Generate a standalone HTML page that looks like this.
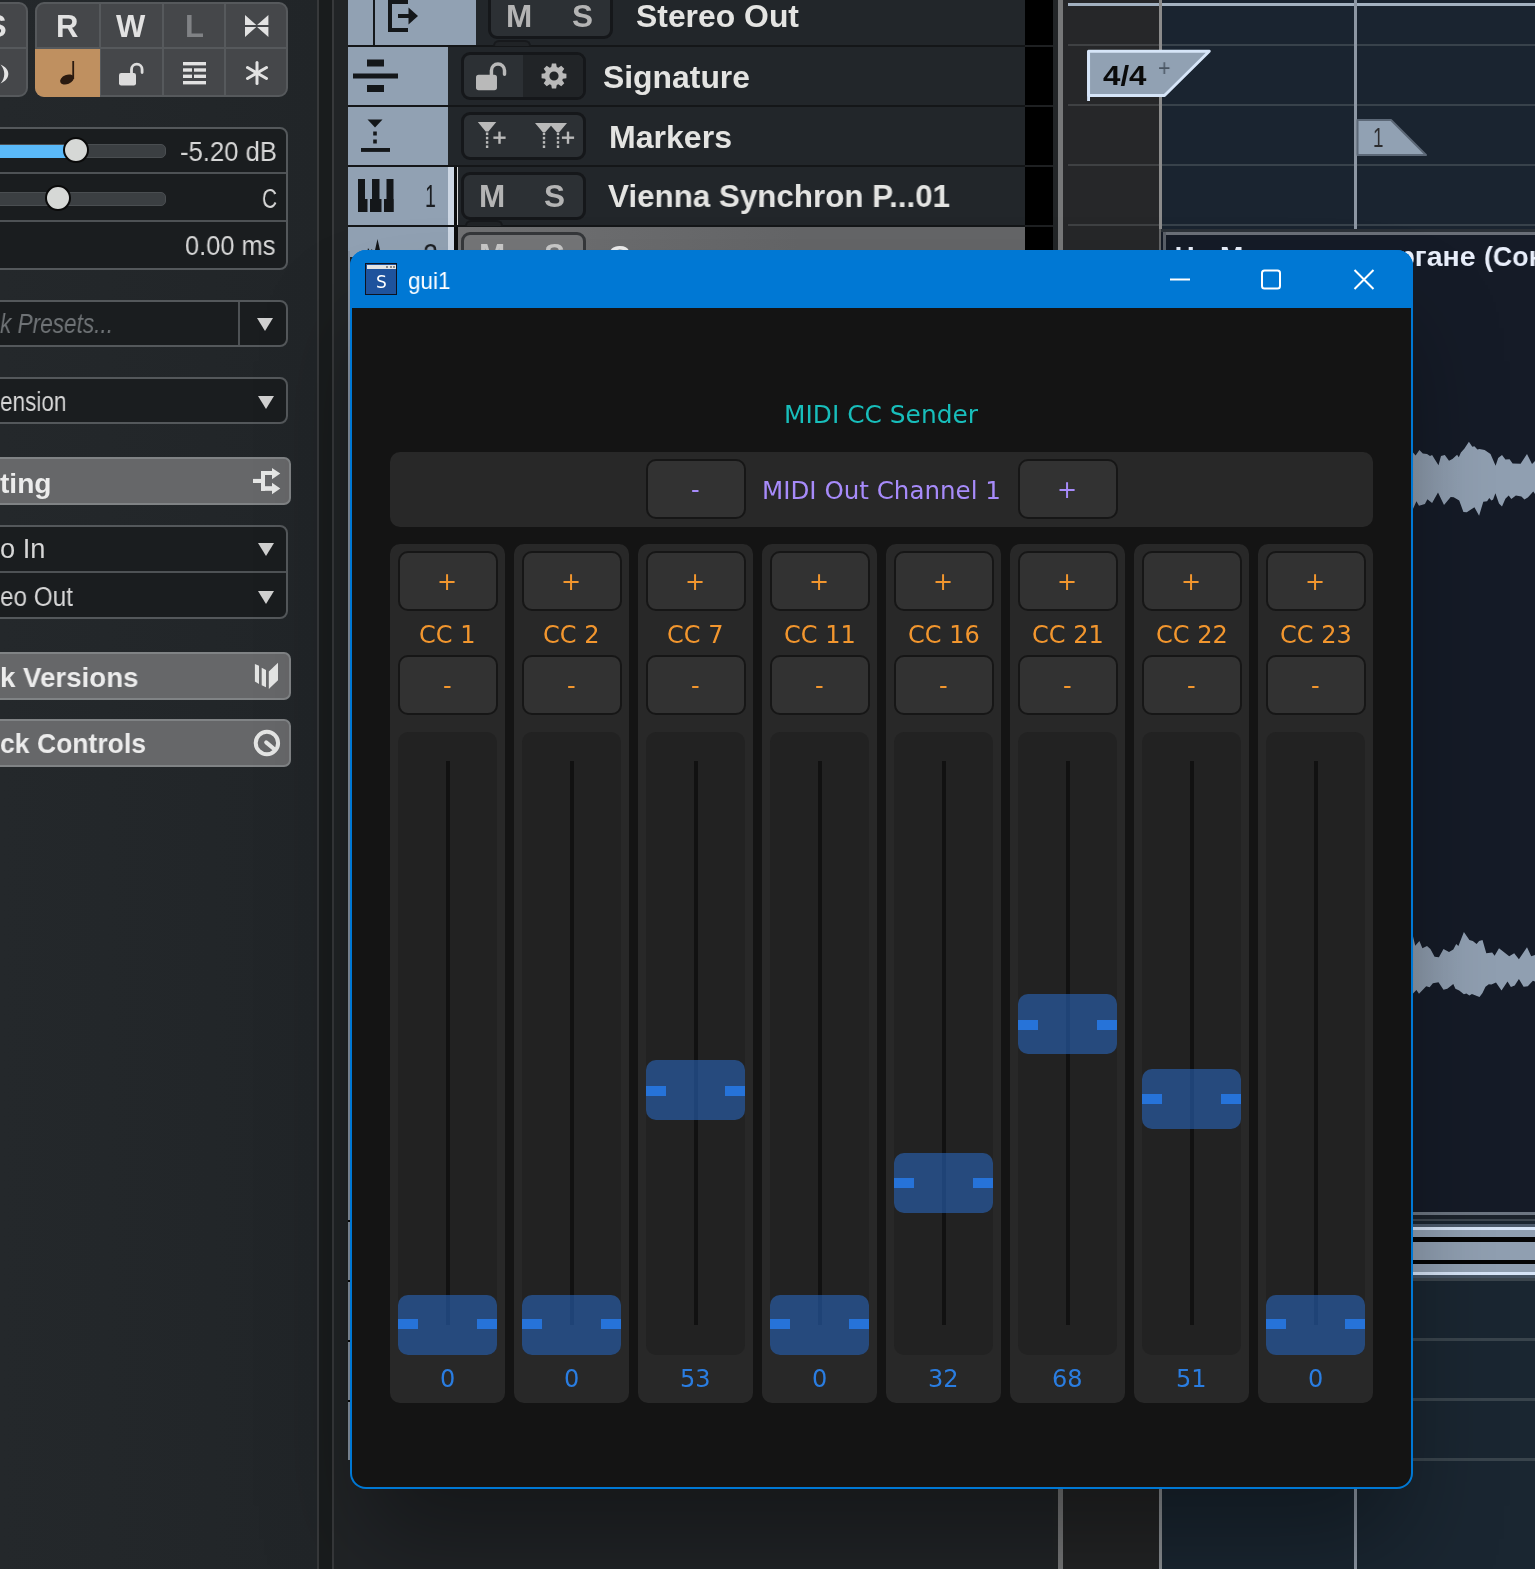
<!DOCTYPE html><html><head><meta charset="utf-8"><title>gui1</title><style>
html,body{margin:0;padding:0;background:#212427;}
body{width:1535px;height:1569px;position:relative;overflow:hidden;font-family:"Liberation Sans",sans-serif;}
div,span.t,svg{position:absolute;box-sizing:border-box;}
span.t{white-space:pre;transform-origin:0 50%;will-change:transform;}
.ib{background:#1a1d1f;border:2px solid #54585b;border-radius:8px;}
.hd{background:#666769;border:2.5px solid #808385;border-radius:7px;}
.grp{background:#2c3034;border:3px solid #15171a;border-radius:9px;}
.btn{background:#323232;border:2px solid #161616;border-radius:10px;}
.col{background:#282828;border-radius:10px;}
.sl{background:#222222;border-radius:10px;}
.hn{background:rgba(41,101,187,0.6);border-radius:10px;}
</style></head><body><div style="left:0px;top:0px;width:317px;height:1569px;background:linear-gradient(90deg,#24282b,#212528);"></div><div style="left:317px;top:0px;width:2.2px;height:1569px;background:#37393b;"></div><div style="left:319.2px;top:0px;width:12.5px;height:1569px;background:#191c1d;"></div><div style="left:331.7px;top:0px;width:2.3px;height:1569px;background:#37393b;"></div><div style="left:334px;top:0px;width:14px;height:1569px;background:#212426;"></div><div style="left:-12px;top:2px;width:40px;height:95px;background:#45474a;border:2px solid #56595c;border-radius:9px;"></div><div style="left:-12px;top:47px;width:38px;height:2px;background:#56595c;"></div><div style="left:35px;top:2px;width:253px;height:95px;background:#45474a;border:2px solid #56595c;border-radius:9px;overflow:hidden;"><div style="left:62px;top:-2px;width:2px;height:96px;background:#56595c;"></div><div style="left:125px;top:-2px;width:2px;height:96px;background:#56595c;"></div><div style="left:187px;top:-2px;width:2px;height:96px;background:#56595c;"></div><div style="left:-2px;top:43px;width:254px;height:2px;background:#56595c;"></div></div><div style="left:35px;top:49px;width:65px;height:48px;background:#bf9060;border-radius:0 0 0 9px;"></div><span class="t" style="left:-14.50px;top:11.26px;font:normal 700 31px/31px 'Liberation Sans', sans-serif;color:#e2e2e2;">S</span><span class="t" style="left:55.80px;top:10.76px;font:normal 700 31px/31px 'Liberation Sans', sans-serif;color:#e2e2e2;">R</span><span class="t" style="left:116.37px;top:10.76px;font:normal 700 31px/31px 'Liberation Sans', sans-serif;color:#e2e2e2;">W</span><span class="t" style="left:184.53px;top:10.76px;font:normal 700 31px/31px 'Liberation Sans', sans-serif;color:#808285;">L</span><svg style="left:245px;top:15px" width="24" height="23" viewBox="0 0 24 23"><path d="M0 0 L11.3 9.9 L0 9.9Z M0 22 L11.3 12.1 L0 12.1Z M23.4 0 L12.1 9.9 L23.4 9.9Z M23.4 22 L12.1 12.1 L23.4 12.1Z" fill="#e2e2e2"/></svg><svg style="left:58px;top:58px" width="22" height="30" viewBox="0 0 22 30"><ellipse cx="9" cy="21.5" rx="7.2" ry="4.6" transform="rotate(-22 9 21.5)" fill="#2a1a10"/><rect x="14.3" y="3" width="1.8" height="18" fill="#2a1a10"/></svg><svg style="left:119px;top:61px" width="26.0" height="26.0" viewBox="0 0 26 26"><rect x="0" y="12" width="17" height="12.5" rx="2.2" fill="#dcdcdc"/><path d="M12.5 13 V8.5 A5.3 5.3 0 0 1 23.1 8.5 V11.5" fill="none" stroke="#dcdcdc" stroke-width="2.8" stroke-linecap="round"/></svg><svg style="left:183px;top:62px" width="24" height="24" viewBox="0 0 24 24"><g fill="#e2e2e2"><rect x="0" y="0" width="23" height="3.4"/><rect x="0" y="6.3" width="9" height="3.4"/><rect x="11" y="6.3" width="12" height="3.4"/><rect x="0" y="12.6" width="9" height="3.4"/><rect x="11" y="12.6" width="12" height="3.4"/><rect x="0" y="19" width="23" height="3.4"/></g></svg><svg style="left:245px;top:61px" width="24" height="24" viewBox="0 0 24 24"><g stroke="#e2e2e2" stroke-width="3" stroke-linecap="round"><line x1="12" y1="1.5" x2="12" y2="22.5"/><line x1="2.5" y1="6.5" x2="21.5" y2="17.5"/><line x1="2.5" y1="17.5" x2="21.5" y2="6.5"/></g></svg><svg style="left:0px;top:64px" width="12" height="20" viewBox="0 0 12 20"><path d="M0.5 0.5 C11 5 11 15 0.5 19.5 C5.5 14 5.5 6 0.5 0.5Z" fill="#e4e4e4"/></svg><div class="ib" style="left:-12px;top:127px;width:300px;height:143px;"></div><div style="left:-10px;top:172px;width:296px;height:2px;background:#4e5255;"></div><div style="left:-10px;top:220px;width:296px;height:2px;background:#4e5255;"></div><div style="left:-12px;top:144px;width:178px;height:14px;background:#3b3f42;border-radius:5px;border:1.5px solid #4a4e51;"></div><div style="left:-12px;top:144.5px;width:90px;height:13px;background:#5ab9f9;"></div><div style="left:62.6px;top:137.4px;width:26px;height:26px;background:#d6d8d6;border-radius:50%;border:2px solid #0a0a0a;"></div><div style="left:-12px;top:191.5px;width:178px;height:14px;background:#3b3f42;border-radius:5px;border:1.5px solid #4a4e51;"></div><div style="left:44.8px;top:185.2px;width:26px;height:26px;background:#d6d8d6;border-radius:50%;border:2px solid #0a0a0a;"></div><span class="t" style="left:180.00px;top:139.14px;font:normal 400 27px/27px 'Liberation Sans', sans-serif;color:#d6d6d6;transform:scaleX(0.9503);">-5.20 dB</span><span class="t" style="left:262.00px;top:186.14px;font:normal 400 27px/27px 'Liberation Sans', sans-serif;color:#d6d6d6;transform:scaleX(0.7692);">C</span><span class="t" style="left:184.50px;top:233.14px;font:normal 400 27px/27px 'Liberation Sans', sans-serif;color:#d6d6d6;transform:scaleX(0.9422);">0.00 ms</span><div class="ib" style="left:-12px;top:300px;width:300px;height:47px;"></div><div style="left:238px;top:302px;width:2px;height:43px;background:#4e5255;"></div><span class="t" style="left:0.00px;top:310.64px;font:italic 400 27px/27px 'Liberation Sans', sans-serif;color:#6f7376;transform:scaleX(0.8367);">k Presets...</span><svg style="left:257.0px;top:318.0px" width="16" height="13" viewBox="0 0 16 13"><polygon points="0,0 16,0 8.0,13" fill="#d0d0d0"/></svg><div class="ib" style="left:-12px;top:377px;width:300px;height:47px;"></div><span class="t" style="left:0.00px;top:388.84px;font:normal 400 27px/27px 'Liberation Sans', sans-serif;color:#d6d6d6;transform:scaleX(0.8357);">ension</span><svg style="left:258.0px;top:395.5px" width="16" height="13" viewBox="0 0 16 13"><polygon points="0,0 16,0 8.0,13" fill="#d0d0d0"/></svg><div class="hd" style="left:-12px;top:457px;width:303px;height:48px;"></div><span class="t" style="left:0.00px;top:469.50px;font:normal 700 28px/28px 'Liberation Sans', sans-serif;color:#ececec;transform:scaleX(1.0037);">ting</span><svg style="left:253px;top:468px" width="29" height="27" viewBox="0 0 29 27"><g fill="#e6e7e6"><rect x="0" y="10.9" width="9" height="4.1"/><rect x="8" y="3" width="4" height="19.8"/><rect x="8" y="3" width="11.5" height="4"/><rect x="8" y="18.2" width="11.5" height="4.6"/><path d="M19 0 L27.3 5.6 L19 11.2Z M19 14.7 L27.3 20.5 L19 26.2Z"/></g></svg><div class="ib" style="left:-12px;top:525px;width:300px;height:94px;"></div><div style="left:-10px;top:571px;width:296px;height:2px;background:#4e5255;"></div><span class="t" style="left:0.00px;top:535.64px;font:normal 400 27px/27px 'Liberation Sans', sans-serif;color:#d6d6d6;transform:scaleX(1.0101);">o In</span><span class="t" style="left:0.00px;top:583.74px;font:normal 400 27px/27px 'Liberation Sans', sans-serif;color:#d6d6d6;transform:scaleX(0.9005);">eo Out</span><svg style="left:258.0px;top:543.0px" width="16" height="13" viewBox="0 0 16 13"><polygon points="0,0 16,0 8.0,13" fill="#d0d0d0"/></svg><svg style="left:258.0px;top:591.0px" width="16" height="13" viewBox="0 0 16 13"><polygon points="0,0 16,0 8.0,13" fill="#d0d0d0"/></svg><div class="hd" style="left:-12px;top:652px;width:303px;height:48px;"></div><span class="t" style="left:0.00px;top:663.80px;font:normal 700 28px/28px 'Liberation Sans', sans-serif;color:#ececec;transform:scaleX(0.9886);">k Versions</span><svg style="left:250px;top:660px" width="32" height="32" viewBox="0 0 32 32"><g fill="#e4e5e4"><path d="M4.9 4 L9 5.7 L9 24 L4.9 21.5Z"/><path d="M11.7 7.8 L16 9.9 L16 27.3 L11.7 25.2Z"/><path d="M18.8 11.5 L28 2.8 L28 20.2 L18.8 28.9Z"/></g></svg><div class="hd" style="left:-12px;top:719.2px;width:303px;height:48px;"></div><span class="t" style="left:0.00px;top:730.30px;font:normal 700 28px/28px 'Liberation Sans', sans-serif;color:#ececec;transform:scaleX(0.9479);">ck Controls</span><svg style="left:252px;top:728px" width="30" height="30" viewBox="0 0 30 30"><circle cx="14.9" cy="15" r="11.2" fill="none" stroke="#e4e5e4" stroke-width="4"/><path d="M14.2 14.4 L23 21.8" stroke="#e4e5e4" stroke-width="4" stroke-linecap="round"/></svg><div style="left:348px;top:0px;width:677px;height:251px;background:#22262a;"></div><div style="left:1025px;top:0px;width:28px;height:251px;background:#000;"></div><div style="left:1053px;top:0px;width:5px;height:1569px;background:#222527;"></div><div style="left:348px;top:45px;width:677px;height:2px;background:#141618;"></div><div style="left:1025px;top:45px;width:28px;height:2px;background:#1e2022;"></div><div style="left:348px;top:105px;width:677px;height:2px;background:#141618;"></div><div style="left:1025px;top:105px;width:28px;height:2px;background:#1e2022;"></div><div style="left:348px;top:165px;width:677px;height:2px;background:#141618;"></div><div style="left:1025px;top:165px;width:28px;height:2px;background:#1e2022;"></div><div style="left:348px;top:225px;width:677px;height:2px;background:#141618;"></div><div style="left:1025px;top:225px;width:28px;height:2px;background:#1e2022;"></div><div style="left:348px;top:0px;width:128px;height:45px;background:#91a1b3;"></div><div style="left:373px;top:0px;width:2px;height:45px;background:#15181b;"></div><svg style="left:386px;top:-7.3px" width="36" height="40" viewBox="0 0 36 40"><path d="M22 9 H4 V37 H22" fill="none" stroke="#14171a" stroke-width="4"/><path d="M12 23 H24" stroke="#14171a" stroke-width="4"/><path d="M22.5 14.5 L32 23 L22.5 31.5Z" fill="#14171a"/></svg><div class="grp" style="left:488px;top:-12px;width:125px;height:50.5px;"></div><span class="t" style="left:506.17px;top:0.84px;font:normal 700 31.5px/31.5px 'Liberation Sans', sans-serif;color:#b4b4b4;">M</span><span class="t" style="left:571.79px;top:0.84px;font:normal 700 31.5px/31.5px 'Liberation Sans', sans-serif;color:#b4b4b4;">S</span><span class="t" style="left:636.00px;top:1.34px;font:normal 700 31.5px/31.5px 'Liberation Sans', sans-serif;color:#e4e4e2;transform:scaleX(1.0122);">Stereo Out</span><div style="left:492.5px;top:40px;width:38px;height:5.5px;background:#202326;border:2px solid #17191c;border-radius:6px 6px 0 0;border-bottom:none;"></div><div style="left:348px;top:47px;width:100px;height:58px;background:#91a1b3;"></div><svg style="left:353px;top:58px" width="46" height="36" viewBox="0 0 46 36"><g fill="#14171a"><rect x="14" y="1.5" width="17" height="7"/><rect x="0" y="15.5" width="45" height="5"/><rect x="14" y="27" width="17" height="7"/></g></svg><div class="grp" style="left:460.5px;top:52px;width:125px;height:47.5px;overflow:hidden;"><div style="left:59px;top:-3px;width:63px;height:48px;background:#212427;"></div></div><svg style="left:476.2px;top:60px" width="32.1" height="32.1" viewBox="0 0 26 26"><rect x="0" y="12" width="17" height="12.5" rx="2.2" fill="#b9b9b9"/><path d="M12.5 13 V8.5 A5.3 5.3 0 0 1 23.1 8.5 V11.5" fill="none" stroke="#b9b9b9" stroke-width="2.8" stroke-linecap="round"/></svg><svg style="left:541px;top:62.5px" width="26" height="26" viewBox="0 0 26 26"><path fill-rule="evenodd" d="M10.87,0.58 L15.13,0.58 L15.75,4.12 L17.34,4.77 L20.27,2.71 L23.29,5.73 L21.23,8.66 L21.88,10.25 L25.42,10.87 L25.42,15.13 L21.88,15.75 L21.23,17.34 L23.29,20.27 L20.27,23.29 L17.34,21.23 L15.75,21.88 L15.13,25.42 L10.87,25.42 L10.25,21.88 L8.66,21.23 L5.73,23.29 L2.71,20.27 L4.77,17.34 L4.12,15.75 L0.58,15.13 L0.58,10.87 L4.12,10.25 L4.77,8.66 L2.71,5.73 L5.73,2.71 L8.66,4.77 L10.25,4.12Z M17.6,13 A4.6 4.6 0 1 0 8.4,13 A4.6 4.6 0 1 0 17.6,13Z" fill="#b9b9b9"/></svg><span class="t" style="left:603.00px;top:61.64px;font:normal 700 31.5px/31.5px 'Liberation Sans', sans-serif;color:#e4e4e2;transform:scaleX(1.0118);">Signature</span><div style="left:348px;top:107px;width:100px;height:58px;background:#91a1b3;"></div><svg style="left:360px;top:118px" width="30" height="36" viewBox="0 0 30 36"><g fill="#14171a"><path d="M7.5 1.5 H22.5 L15 9.5Z"/><rect x="13.2" y="13.5" width="3.6" height="4"/><rect x="13.2" y="21.5" width="3.6" height="4"/><rect x="1" y="30" width="29" height="3.9"/></g></svg><div class="grp" style="left:460.5px;top:112px;width:125px;height:47.5px;"></div><svg style="left:476px;top:121px" width="104" height="30" viewBox="0 0 104 30"><g fill="#b9b9b9"><path d="M1.8 1 H20.3 L12.4 10.5 H9.7Z"/><rect x="9.9" y="11.5" width="2.4" height="2.6"/><rect x="9.9" y="15.8" width="2.4" height="2.6"/><rect x="9.9" y="20.1" width="2.4" height="2.6"/><rect x="9.9" y="24.4" width="2.4" height="2.6"/><rect x="17.4" y="15.5" width="12.2" height="2.4"/><rect x="22.3" y="10.6" width="2.4" height="12.2"/><path d="M59 2 H91 L83.4 11 H80.6 L75 4.8 L69.4 11 H66.6Z"/><rect x="66.8" y="11.5" width="2.4" height="2.6"/><rect x="66.8" y="15.8" width="2.4" height="2.6"/><rect x="66.8" y="20.1" width="2.4" height="2.6"/><rect x="66.8" y="24.4" width="2.4" height="2.6"/><rect x="80.8" y="11.5" width="2.4" height="2.6"/><rect x="80.8" y="15.8" width="2.4" height="2.6"/><rect x="80.8" y="20.1" width="2.4" height="2.6"/><rect x="80.8" y="24.4" width="2.4" height="2.6"/><rect x="85.9" y="15.5" width="12.2" height="2.4"/><rect x="90.8" y="10.6" width="2.4" height="12.2"/></g></svg><span class="t" style="left:609.00px;top:121.64px;font:normal 700 31.5px/31.5px 'Liberation Sans', sans-serif;color:#e4e4e2;transform:scaleX(1.0178);">Markers</span><div style="left:348px;top:167px;width:100px;height:58px;background:#91a1b3;"></div><div style="left:448px;top:167px;width:6px;height:58px;background:#cdd7e4;"></div><div style="left:454px;top:167px;width:3px;height:58px;background:#0c0d0e;"></div><div style="left:457px;top:167px;width:1px;height:58px;background:#d8d8d8;"></div><svg style="left:358px;top:179px" width="36" height="33" viewBox="0 0 36 33"><g fill="#14171a"><rect x="0" y="0" width="7" height="33"/><rect x="0" y="20" width="9.5" height="13"/><rect x="14" y="0" width="7.5" height="33"/><rect x="12" y="20" width="11.5" height="13"/><rect x="28.5" y="0" width="7" height="33"/><rect x="26" y="20" width="9.5" height="13"/></g></svg><span class="t" style="left:425.00px;top:181.06px;font:normal 400 31px/31px 'Liberation Sans', sans-serif;color:#1b1e22;transform:scaleX(0.6377);">1</span><div class="grp" style="left:460.5px;top:172px;width:125px;height:47.5px;"></div><span class="t" style="left:478.57px;top:180.84px;font:normal 700 31.5px/31.5px 'Liberation Sans', sans-serif;color:#b4b4b4;">M</span><span class="t" style="left:544.29px;top:180.84px;font:normal 700 31.5px/31.5px 'Liberation Sans', sans-serif;color:#b4b4b4;">S</span><span class="t" style="left:608.00px;top:180.64px;font:normal 700 31.5px/31.5px 'Liberation Sans', sans-serif;color:#e4e4e2;transform:scaleX(0.9950);">Vienna Synchron P...01</span><div style="left:465px;top:220px;width:38px;height:5.5px;background:#202326;border:2px solid #17191c;border-radius:6px 6px 0 0;border-bottom:none;"></div><div style="left:348px;top:227px;width:100px;height:30px;background:#91a1b3;"></div><div style="left:448px;top:227px;width:6px;height:30px;background:#cdd7e4;"></div><div style="left:454px;top:227px;width:4px;height:30px;background:#0c0d0e;"></div><div style="left:458px;top:227px;width:567px;height:30px;background:linear-gradient(90deg,#707173,#646567 60%);"></div><div style="left:460.5px;top:232px;width:125px;height:47.5px;background:#747577;border:3px solid #35373a;border-radius:9px;"></div><span class="t" style="left:478.57px;top:240.34px;font:normal 700 31.5px/31.5px 'Liberation Sans', sans-serif;color:#c8c8c8;">M</span><span class="t" style="left:544.29px;top:240.34px;font:normal 700 31.5px/31.5px 'Liberation Sans', sans-serif;color:#c8c8c8;">S</span><span class="t" style="left:608.00px;top:241.10px;font:normal 700 30px/30px 'Liberation Sans', sans-serif;color:#ececec;">G</span><span class="t" style="left:423.00px;top:239.76px;font:normal 400 31px/31px 'Liberation Sans', sans-serif;color:#1b1e22;transform:scaleX(0.8696);">2</span><svg style="left:366px;top:239px" width="24" height="20" viewBox="0 0 24 20"><path d="M0 20 L2 9 L4 12 L6 10 L8 20Z M7 20 L11.5 0 L16 20Z" fill="#14171a"/></svg><div style="left:348px;top:251px;width:2px;height:1209px;background:#8793a2;"></div><div style="left:348px;top:1220px;width:2px;height:2px;background:#0a0a0a;"></div><div style="left:348px;top:1280px;width:2px;height:2px;background:#0a0a0a;"></div><div style="left:348px;top:1340px;width:2px;height:2px;background:#0a0a0a;"></div><div style="left:348px;top:1400px;width:2px;height:2px;background:#0a0a0a;"></div><div style="left:1058px;top:0px;width:5px;height:1569px;background:#767778;"></div><div style="left:1063px;top:0px;width:97px;height:1569px;background:#262729;"></div><div style="left:1162px;top:0px;width:373px;height:1569px;background:#1a2430;"></div><div style="left:1063px;top:1281px;width:97px;height:288px;background:#232425;"></div><div style="left:1068px;top:3px;width:467px;height:2.5px;background:#a3b1c0;"></div><div style="left:1068px;top:43.5px;width:92px;height:2px;background:#3f4143;"></div><div style="left:1162px;top:43.5px;width:373px;height:2px;background:#38424b;"></div><div style="left:1068px;top:103.5px;width:92px;height:2px;background:#3f4143;"></div><div style="left:1162px;top:103.5px;width:373px;height:2px;background:#38424b;"></div><div style="left:1068px;top:163.5px;width:92px;height:2px;background:#3f4143;"></div><div style="left:1162px;top:163.5px;width:373px;height:2px;background:#38424b;"></div><div style="left:1068px;top:223.5px;width:92px;height:2px;background:#3f4143;"></div><div style="left:1162px;top:223.5px;width:373px;height:2px;background:#38424b;"></div><div style="left:1159px;top:0px;width:3px;height:232px;background:#8b8b8b;"></div><div style="left:1354px;top:0px;width:3px;height:230px;background:#8c96a3;"></div><svg style="left:1085px;top:48px" width="130" height="56" viewBox="0 0 130 56"><path d="M3.6 3.2 H124.3 L79.5 47.5 H3.6Z" fill="#91a1b3" stroke="#d6e5f8" stroke-width="2.9" stroke-linejoin="round"/><rect x="2.1" y="3" width="2.9" height="50" fill="#d6e5f8"/></svg><span class="t" style="left:1103.00px;top:61.80px;font:normal 700 28px/28px 'Liberation Sans', sans-serif;color:#0a0a0a;transform:scaleX(1.1172);">4/4</span><span class="t" style="left:1157.50px;top:56.83px;font:normal 400 23px/23px 'Liberation Sans', sans-serif;color:#4a5663;transform:scaleX(0.9302);">+</span><svg style="left:1355px;top:117.4px" width="76" height="42" viewBox="0 0 76 42"><path d="M2.5 3 H36 L71 38 H2.5Z" fill="#91a1b3" stroke="#5c6877" stroke-width="2" stroke-linejoin="round"/></svg><span class="t" style="left:1373.35px;top:124.30px;font:normal 400 28px/28px 'Liberation Sans', sans-serif;color:#2c2c2e;transform:scaleX(0.6740);">1</span><div style="left:1160px;top:229px;width:375px;height:983px;background:#151b27;"></div><div style="left:1160px;top:229px;width:375px;height:3px;background:#2b3138;"></div><div style="left:1163px;top:232px;width:372px;height:2.5px;background:#6a6f78;"></div><div style="left:1159px;top:229px;width:1.5px;height:24px;background:#636466;"></div><div style="left:1163px;top:232px;width:2.5px;height:30px;background:#5a5f68;"></div><span class="t" style="left:1175.00px;top:242.70px;font:normal 700 28px/28px 'Liberation Sans', sans-serif;color:#e8eefa;">Ч.</span><span class="t" style="left:1219.50px;top:242.70px;font:normal 700 28px/28px 'Liberation Sans', sans-serif;color:#e8eefa;">Марчелло на</span><span class="t" style="left:1379.50px;top:242.70px;font:normal 700 28px/28px 'Liberation Sans', sans-serif;color:#e8eefa;transform:scaleX(1.0177);">органе</span><span class="t" style="left:1483.60px;top:242.70px;font:normal 700 28px/28px 'Liberation Sans', sans-serif;color:#e8eefa;transform:scaleX(0.9565);">(Сон</span><svg style="left:0;top:0" width="1535" height="1569" viewBox="0 0 1535 1569"><defs><linearGradient id="wg" x1="1413" x2="1460" y1="0" y2="0" gradientUnits="userSpaceOnUse"><stop offset="0" stop-color="#8c9aab"/><stop offset="1" stop-color="#909fb1"/></linearGradient></defs><polygon points="1395.0,452.6 1413.0,452.6 1415.6,455.6 1419.4,450.1 1422.8,453.5 1427.0,453.9 1430.0,456.0 1432.1,455.1 1438.5,465.3 1441.0,456.0 1444.8,455.1 1449.0,460.7 1452.4,459.0 1457.1,454.7 1458.8,457.3 1460.9,452.6 1464.3,448.8 1468.9,441.8 1472.3,446.7 1474.4,446.3 1477.4,449.6 1479.5,449.0 1484.6,450.1 1490.5,453.9 1495.6,465.7 1498.2,458.1 1502.0,454.9 1505.4,459.4 1509.6,459.2 1512.6,463.6 1520.6,463.8 1527.0,454.0 1532.0,464.0 1535.4,460.7 1535.4,494.5 1533.3,491.6 1527.8,497.5 1524.4,499.6 1521.4,496.6 1515.9,495.4 1511.3,498.9 1508.7,495.4 1505.4,498.8 1502.0,506.4 1499.0,503.4 1495.4,493.3 1493.1,499.6 1491.4,500.5 1489.3,497.9 1487.1,501.3 1483.3,501.7 1479.1,515.7 1474.4,507.2 1466.8,512.3 1463.4,511.9 1459.2,500.5 1453.7,497.2 1450.7,497.1 1444.0,504.9 1438.0,492.4 1432.1,503.0 1427.4,499.2 1424.9,504.0 1419.0,505.7 1416.4,501.3 1413.0,508.9 1395.0,508.9" fill="url(#wg)"/><polygon points="1395.0,936.3 1413.0,936.3 1415.2,945.7 1419.4,941.0 1422.4,948.2 1427.0,946.1 1430.4,949.0 1434.6,956.7 1438.9,957.3 1443.5,949.0 1449.0,952.0 1453.3,949.5 1456.2,944.0 1458.4,946.1 1463.9,931.9 1469.4,940.1 1472.8,941.0 1476.6,944.0 1479.1,941.0 1482.5,939.9 1486.3,953.3 1492.2,952.4 1494.6,955.8 1499.0,948.2 1509.2,956.2 1514.2,953.3 1518.9,959.2 1527.0,947.3 1531.2,956.2 1535.4,955.0 1535.4,981.6 1532.9,980.8 1527.8,986.3 1523.6,986.7 1518.9,979.1 1514.7,985.5 1510.9,987.0 1507.5,981.6 1501.5,990.5 1496.0,982.5 1491.4,984.6 1488.8,984.2 1485.5,986.7 1482.5,993.1 1479.5,997.1 1471.9,994.1 1469.4,995.6 1466.4,993.5 1463.9,994.3 1459.2,990.5 1455.4,988.8 1453.3,983.9 1447.3,988.8 1443.5,989.7 1438.5,982.2 1432.9,983.3 1429.6,987.3 1426.2,986.3 1419.0,993.8 1416.4,990.1 1413.0,993.5 1395.0,993.5" fill="url(#wg)"/></svg><div style="left:1160px;top:1212px;width:375px;height:2.5px;background:#6d7682;"></div><div style="left:1160px;top:1214.5px;width:375px;height:4px;background:#1c232c;"></div><div style="left:1160px;top:1218.5px;width:375px;height:2.5px;background:#3e4750;"></div><div style="left:1160px;top:1221px;width:375px;height:3px;background:#1a2530;"></div><div style="left:1160px;top:1224px;width:375px;height:3px;background:#4d5b6c;"></div><div style="left:1160px;top:1227px;width:375px;height:3px;background:#d7e5f8;"></div><div style="left:1160px;top:1230px;width:375px;height:42px;background:#909fb1;"></div><div style="left:1160px;top:1272px;width:375px;height:3px;background:#d7e5f8;"></div><div style="left:1160px;top:1275px;width:375px;height:2.5px;background:#465464;"></div><div style="left:1160px;top:1277.5px;width:375px;height:3px;background:#3b454d;"></div><div style="left:1160px;top:1237px;width:395px;height:4.5px;background:#050505;border-radius:2px;"></div><div style="left:1160px;top:1259.5px;width:395px;height:4.5px;background:#050505;border-radius:2px;"></div><div style="left:1160px;top:1281px;width:375px;height:288px;background:#1a2631;"></div><div style="left:1160px;top:1338.3px;width:375px;height:2.5px;background:#39444c;"></div><div style="left:1160px;top:1398.3px;width:375px;height:2.5px;background:#39444c;"></div><div style="left:1160px;top:1458.3px;width:375px;height:2.5px;background:#39444c;"></div><div style="left:1159px;top:1281px;width:2.5px;height:288px;background:#8b8f93;"></div><div style="left:1354px;top:1281px;width:3px;height:288px;background:#8c96a3;"></div><div style="left:350px;top:250px;width:1063px;height:1239px;border-radius:16px;overflow:hidden;background:#0078d4;box-shadow:0 64px 100px -14px rgba(0,0,0,0.36);"><div style="left:0px;top:0px;width:1063px;height:58px;background:#0078d4;"></div><div style="left:15px;top:13px;width:32px;height:32px;background:#1e539d;border:1.5px solid #0d1320;"></div><div style="left:16.5px;top:14.5px;width:29px;height:4.5px;background:#e4e4e4;"></div><div style="left:36px;top:16px;width:2px;height:2px;background:#8a8a8a;"></div><div style="left:39.5px;top:16px;width:2px;height:2px;background:#8a8a8a;"></div><div style="left:43px;top:16px;width:2px;height:2px;background:#8a8a8a;"></div><span class="t" style="left:25.60px;top:23.62px;font:normal 400 17px/17px 'DejaVu Sans', 'Liberation Sans', sans-serif;color:#ffffff;">S</span><span class="t" style="left:57.50px;top:19.18px;font:normal 400 24px/24px 'Liberation Sans', sans-serif;color:#ffffff;transform:scaleX(0.9366);">gui1</span><svg style="left:810px;top:8.7px" width="230" height="42" viewBox="0 0 230 42"><g fill="none" stroke="#fff" stroke-width="2"><path d="M10 20.5 H30"/><rect x="102" y="11.5" width="18" height="18" rx="2.5"/><path d="M194.5 11 L213.5 30 M213.5 11 L194.5 30"/></g></svg><div style="left:2px;top:58px;width:1059px;height:1179px;background:#141414;border-radius:0 0 14px 14px;"></div><span class="t" style="left:434.00px;top:152.70px;font:normal 400 24px/24px 'DejaVu Sans', 'Liberation Sans', sans-serif;color:#18bebb;transform:scaleX(1.0363);">MIDI CC Sender</span><div style="left:40px;top:202px;width:983px;height:75px;background:#282828;border-radius:10px;"></div><div class="btn" style="left:295.5px;top:209px;width:100px;height:60px;"></div><div class="btn" style="left:667.5px;top:209px;width:100px;height:60px;"></div><span class="t" style="left:341.16px;top:227.70px;font:normal 400 24px/24px 'DejaVu Sans', 'Liberation Sans', sans-serif;color:#a78bfa;">-</span><span class="t" style="left:707.45px;top:227.70px;font:normal 400 24px/24px 'DejaVu Sans', 'Liberation Sans', sans-serif;color:#a78bfa;">+</span><span class="t" style="left:412.00px;top:228.70px;font:normal 400 24px/24px 'DejaVu Sans', 'Liberation Sans', sans-serif;color:#a78bfa;transform:scaleX(1.0233);">MIDI Out Channel 1</span><div class="col" style="left:40px;top:294px;width:115px;height:859px;"></div><div class="btn" style="left:47.5px;top:301px;width:100px;height:60px;"></div><span class="t" style="left:87.45px;top:320.20px;font:normal 400 24px/24px 'DejaVu Sans', 'Liberation Sans', sans-serif;color:#f2962e;">+</span><span class="t" style="left:69.29px;top:373.00px;font:normal 400 24px/24px 'DejaVu Sans', 'Liberation Sans', sans-serif;color:#f2962e;">CC 1</span><div class="btn" style="left:47.5px;top:405px;width:100px;height:60px;"></div><span class="t" style="left:93.16px;top:423.70px;font:normal 400 24px/24px 'DejaVu Sans', 'Liberation Sans', sans-serif;color:#f2962e;">-</span><div class="sl" style="left:48px;top:482px;width:99px;height:623px;"></div><div style="left:95.5px;top:511px;width:4px;height:564px;background:#111111;"></div><div class="hn" style="left:48px;top:1045px;width:99px;height:60px;"></div><div style="left:48px;top:1069.0px;width:20px;height:10px;background:#2673d9;"></div><div style="left:127px;top:1069.0px;width:20px;height:10px;background:#2673d9;"></div><span class="t" style="left:89.86px;top:1117.20px;font:normal 400 24px/24px 'DejaVu Sans', 'Liberation Sans', sans-serif;color:#2a7de1;">0</span><div class="col" style="left:164px;top:294px;width:115px;height:859px;"></div><div class="btn" style="left:171.5px;top:301px;width:100px;height:60px;"></div><span class="t" style="left:211.45px;top:320.20px;font:normal 400 24px/24px 'DejaVu Sans', 'Liberation Sans', sans-serif;color:#f2962e;">+</span><span class="t" style="left:193.29px;top:373.00px;font:normal 400 24px/24px 'DejaVu Sans', 'Liberation Sans', sans-serif;color:#f2962e;">CC 2</span><div class="btn" style="left:171.5px;top:405px;width:100px;height:60px;"></div><span class="t" style="left:217.16px;top:423.70px;font:normal 400 24px/24px 'DejaVu Sans', 'Liberation Sans', sans-serif;color:#f2962e;">-</span><div class="sl" style="left:172px;top:482px;width:99px;height:623px;"></div><div style="left:219.5px;top:511px;width:4px;height:564px;background:#111111;"></div><div class="hn" style="left:172px;top:1045px;width:99px;height:60px;"></div><div style="left:172px;top:1069.0px;width:20px;height:10px;background:#2673d9;"></div><div style="left:251px;top:1069.0px;width:20px;height:10px;background:#2673d9;"></div><span class="t" style="left:213.86px;top:1117.20px;font:normal 400 24px/24px 'DejaVu Sans', 'Liberation Sans', sans-serif;color:#2a7de1;">0</span><div class="col" style="left:288px;top:294px;width:115px;height:859px;"></div><div class="btn" style="left:295.5px;top:301px;width:100px;height:60px;"></div><span class="t" style="left:335.45px;top:320.20px;font:normal 400 24px/24px 'DejaVu Sans', 'Liberation Sans', sans-serif;color:#f2962e;">+</span><span class="t" style="left:317.29px;top:373.00px;font:normal 400 24px/24px 'DejaVu Sans', 'Liberation Sans', sans-serif;color:#f2962e;">CC 7</span><div class="btn" style="left:295.5px;top:405px;width:100px;height:60px;"></div><span class="t" style="left:341.16px;top:423.70px;font:normal 400 24px/24px 'DejaVu Sans', 'Liberation Sans', sans-serif;color:#f2962e;">-</span><div class="sl" style="left:296px;top:482px;width:99px;height:623px;"></div><div style="left:343.5px;top:511px;width:4px;height:564px;background:#111111;"></div><div class="hn" style="left:296px;top:810px;width:99px;height:60px;"></div><div style="left:296px;top:835.544094488189px;width:20px;height:10px;background:#2673d9;"></div><div style="left:375px;top:835.544094488189px;width:20px;height:10px;background:#2673d9;"></div><span class="t" style="left:330.23px;top:1117.20px;font:normal 400 24px/24px 'DejaVu Sans', 'Liberation Sans', sans-serif;color:#2a7de1;">53</span><div class="col" style="left:412px;top:294px;width:115px;height:859px;"></div><div class="btn" style="left:419.5px;top:301px;width:100px;height:60px;"></div><span class="t" style="left:459.45px;top:320.20px;font:normal 400 24px/24px 'DejaVu Sans', 'Liberation Sans', sans-serif;color:#f2962e;">+</span><span class="t" style="left:433.66px;top:373.00px;font:normal 400 24px/24px 'DejaVu Sans', 'Liberation Sans', sans-serif;color:#f2962e;">CC 11</span><div class="btn" style="left:419.5px;top:405px;width:100px;height:60px;"></div><span class="t" style="left:465.16px;top:423.70px;font:normal 400 24px/24px 'DejaVu Sans', 'Liberation Sans', sans-serif;color:#f2962e;">-</span><div class="sl" style="left:420px;top:482px;width:99px;height:623px;"></div><div style="left:467.5px;top:511px;width:4px;height:564px;background:#111111;"></div><div class="hn" style="left:420px;top:1045px;width:99px;height:60px;"></div><div style="left:420px;top:1069.0px;width:20px;height:10px;background:#2673d9;"></div><div style="left:499px;top:1069.0px;width:20px;height:10px;background:#2673d9;"></div><span class="t" style="left:461.86px;top:1117.20px;font:normal 400 24px/24px 'DejaVu Sans', 'Liberation Sans', sans-serif;color:#2a7de1;">0</span><div class="col" style="left:536px;top:294px;width:115px;height:859px;"></div><div class="btn" style="left:543.5px;top:301px;width:100px;height:60px;"></div><span class="t" style="left:583.45px;top:320.20px;font:normal 400 24px/24px 'DejaVu Sans', 'Liberation Sans', sans-serif;color:#f2962e;">+</span><span class="t" style="left:557.66px;top:373.00px;font:normal 400 24px/24px 'DejaVu Sans', 'Liberation Sans', sans-serif;color:#f2962e;">CC 16</span><div class="btn" style="left:543.5px;top:405px;width:100px;height:60px;"></div><span class="t" style="left:589.16px;top:423.70px;font:normal 400 24px/24px 'DejaVu Sans', 'Liberation Sans', sans-serif;color:#f2962e;">-</span><div class="sl" style="left:544px;top:482px;width:99px;height:623px;"></div><div style="left:591.5px;top:511px;width:4px;height:564px;background:#111111;"></div><div class="hn" style="left:544px;top:903px;width:99px;height:60px;"></div><div style="left:544px;top:927.9322834645669px;width:20px;height:10px;background:#2673d9;"></div><div style="left:623px;top:927.9322834645669px;width:20px;height:10px;background:#2673d9;"></div><span class="t" style="left:578.23px;top:1117.20px;font:normal 400 24px/24px 'DejaVu Sans', 'Liberation Sans', sans-serif;color:#2a7de1;">32</span><div class="col" style="left:660px;top:294px;width:115px;height:859px;"></div><div class="btn" style="left:667.5px;top:301px;width:100px;height:60px;"></div><span class="t" style="left:707.45px;top:320.20px;font:normal 400 24px/24px 'DejaVu Sans', 'Liberation Sans', sans-serif;color:#f2962e;">+</span><span class="t" style="left:681.66px;top:373.00px;font:normal 400 24px/24px 'DejaVu Sans', 'Liberation Sans', sans-serif;color:#f2962e;">CC 21</span><div class="btn" style="left:667.5px;top:405px;width:100px;height:60px;"></div><span class="t" style="left:713.16px;top:423.70px;font:normal 400 24px/24px 'DejaVu Sans', 'Liberation Sans', sans-serif;color:#f2962e;">-</span><div class="sl" style="left:668px;top:482px;width:99px;height:623px;"></div><div style="left:715.5px;top:511px;width:4px;height:564px;background:#111111;"></div><div class="hn" style="left:668px;top:744px;width:99px;height:60px;"></div><div style="left:668px;top:769.9811023622048px;width:20px;height:10px;background:#2673d9;"></div><div style="left:747px;top:769.9811023622048px;width:20px;height:10px;background:#2673d9;"></div><span class="t" style="left:702.23px;top:1117.20px;font:normal 400 24px/24px 'DejaVu Sans', 'Liberation Sans', sans-serif;color:#2a7de1;">68</span><div class="col" style="left:784px;top:294px;width:115px;height:859px;"></div><div class="btn" style="left:791.5px;top:301px;width:100px;height:60px;"></div><span class="t" style="left:831.45px;top:320.20px;font:normal 400 24px/24px 'DejaVu Sans', 'Liberation Sans', sans-serif;color:#f2962e;">+</span><span class="t" style="left:805.66px;top:373.00px;font:normal 400 24px/24px 'DejaVu Sans', 'Liberation Sans', sans-serif;color:#f2962e;">CC 22</span><div class="btn" style="left:791.5px;top:405px;width:100px;height:60px;"></div><span class="t" style="left:837.16px;top:423.70px;font:normal 400 24px/24px 'DejaVu Sans', 'Liberation Sans', sans-serif;color:#f2962e;">-</span><div class="sl" style="left:792px;top:482px;width:99px;height:623px;"></div><div style="left:839.5px;top:511px;width:4px;height:564px;background:#111111;"></div><div class="hn" style="left:792px;top:819px;width:99px;height:60px;"></div><div style="left:792px;top:844.4858267716536px;width:20px;height:10px;background:#2673d9;"></div><div style="left:871px;top:844.4858267716536px;width:20px;height:10px;background:#2673d9;"></div><span class="t" style="left:826.23px;top:1117.20px;font:normal 400 24px/24px 'DejaVu Sans', 'Liberation Sans', sans-serif;color:#2a7de1;">51</span><div class="col" style="left:908px;top:294px;width:115px;height:859px;"></div><div class="btn" style="left:915.5px;top:301px;width:100px;height:60px;"></div><span class="t" style="left:955.45px;top:320.20px;font:normal 400 24px/24px 'DejaVu Sans', 'Liberation Sans', sans-serif;color:#f2962e;">+</span><span class="t" style="left:929.66px;top:373.00px;font:normal 400 24px/24px 'DejaVu Sans', 'Liberation Sans', sans-serif;color:#f2962e;">CC 23</span><div class="btn" style="left:915.5px;top:405px;width:100px;height:60px;"></div><span class="t" style="left:961.16px;top:423.70px;font:normal 400 24px/24px 'DejaVu Sans', 'Liberation Sans', sans-serif;color:#f2962e;">-</span><div class="sl" style="left:916px;top:482px;width:99px;height:623px;"></div><div style="left:963.5px;top:511px;width:4px;height:564px;background:#111111;"></div><div class="hn" style="left:916px;top:1045px;width:99px;height:60px;"></div><div style="left:916px;top:1069.0px;width:20px;height:10px;background:#2673d9;"></div><div style="left:995px;top:1069.0px;width:20px;height:10px;background:#2673d9;"></div><span class="t" style="left:957.86px;top:1117.20px;font:normal 400 24px/24px 'DejaVu Sans', 'Liberation Sans', sans-serif;color:#2a7de1;">0</span></div></body></html>
